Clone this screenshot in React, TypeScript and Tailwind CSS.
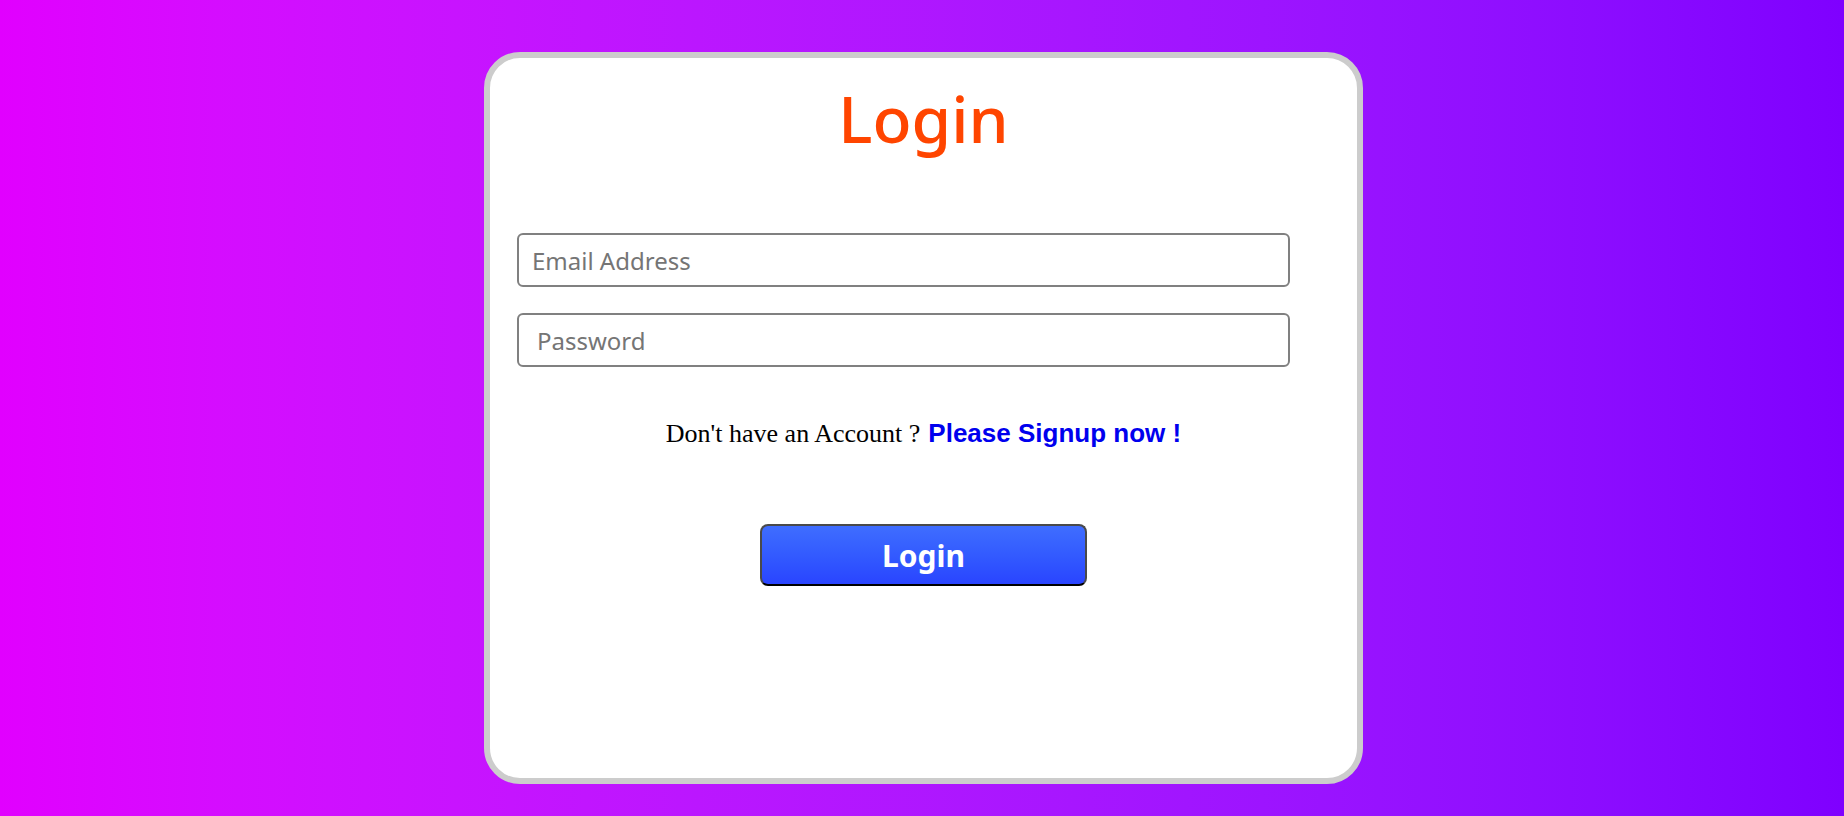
import { useState } from "react";

export default function App() {
  const [email, setEmail] = useState("");
  const [password, setPassword] = useState("");

  return (
    <div className="min-h-[816px] w-full bg-gradient-to-r from-[#e100ff] to-[#7f00ff] pl-[3px] pt-[52px] font-['Noto_Sans',sans-serif]">
      <div className="mx-auto flex h-[732px] w-[879px] flex-col rounded-[36px] border-[6px] border-[#cccccc] bg-white">
        <h1 className="pt-[29px] text-center text-[64px] font-medium leading-none text-[#ff4500]">
          Login
        </h1>

        <form className="flex flex-col" onSubmit={(e) => e.preventDefault()}>
          <input
            type="email"
            value={email}
            onChange={(e) => setEmail(e.target.value)}
            placeholder="Email Address"
            className="ml-[27px] mt-[82px] h-[54px] w-[773px] rounded-[6px] border-2 border-[#808080] pl-[13px] text-[24px] text-gray-700 placeholder-[#757575] outline-none"
          />
          <input
            type="password"
            value={password}
            onChange={(e) => setPassword(e.target.value)}
            placeholder="Password"
            className="ml-[27px] mt-[26px] h-[54px] w-[773px] rounded-[6px] border-2 border-[#808080] pl-[18px] text-[24px] text-gray-700 placeholder-[#757575] outline-none"
          />

          <p className="mt-[53px] flex items-baseline justify-center gap-[8px] leading-[26px]">
            <span className="font-['Liberation_Serif',serif] text-[26px] text-black">
              Don't have an Account ?
            </span>
            <a href="#" className="font-['Liberation_Sans',sans-serif] text-[26px] font-bold text-[#0000ee]">
              Please Signup now !
            </a>
          </p>

          <button
            type="submit"
            className="mx-auto mt-[77px] h-[62px] w-[327px] rounded-[8px] border-2 border-[#4a4a4a] border-b-black bg-gradient-to-b from-[#3f6dff] to-[#2a44ff] text-[30px] font-bold text-white"
          >
            Login
          </button>
        </form>
      </div>
    </div>
  );
}
